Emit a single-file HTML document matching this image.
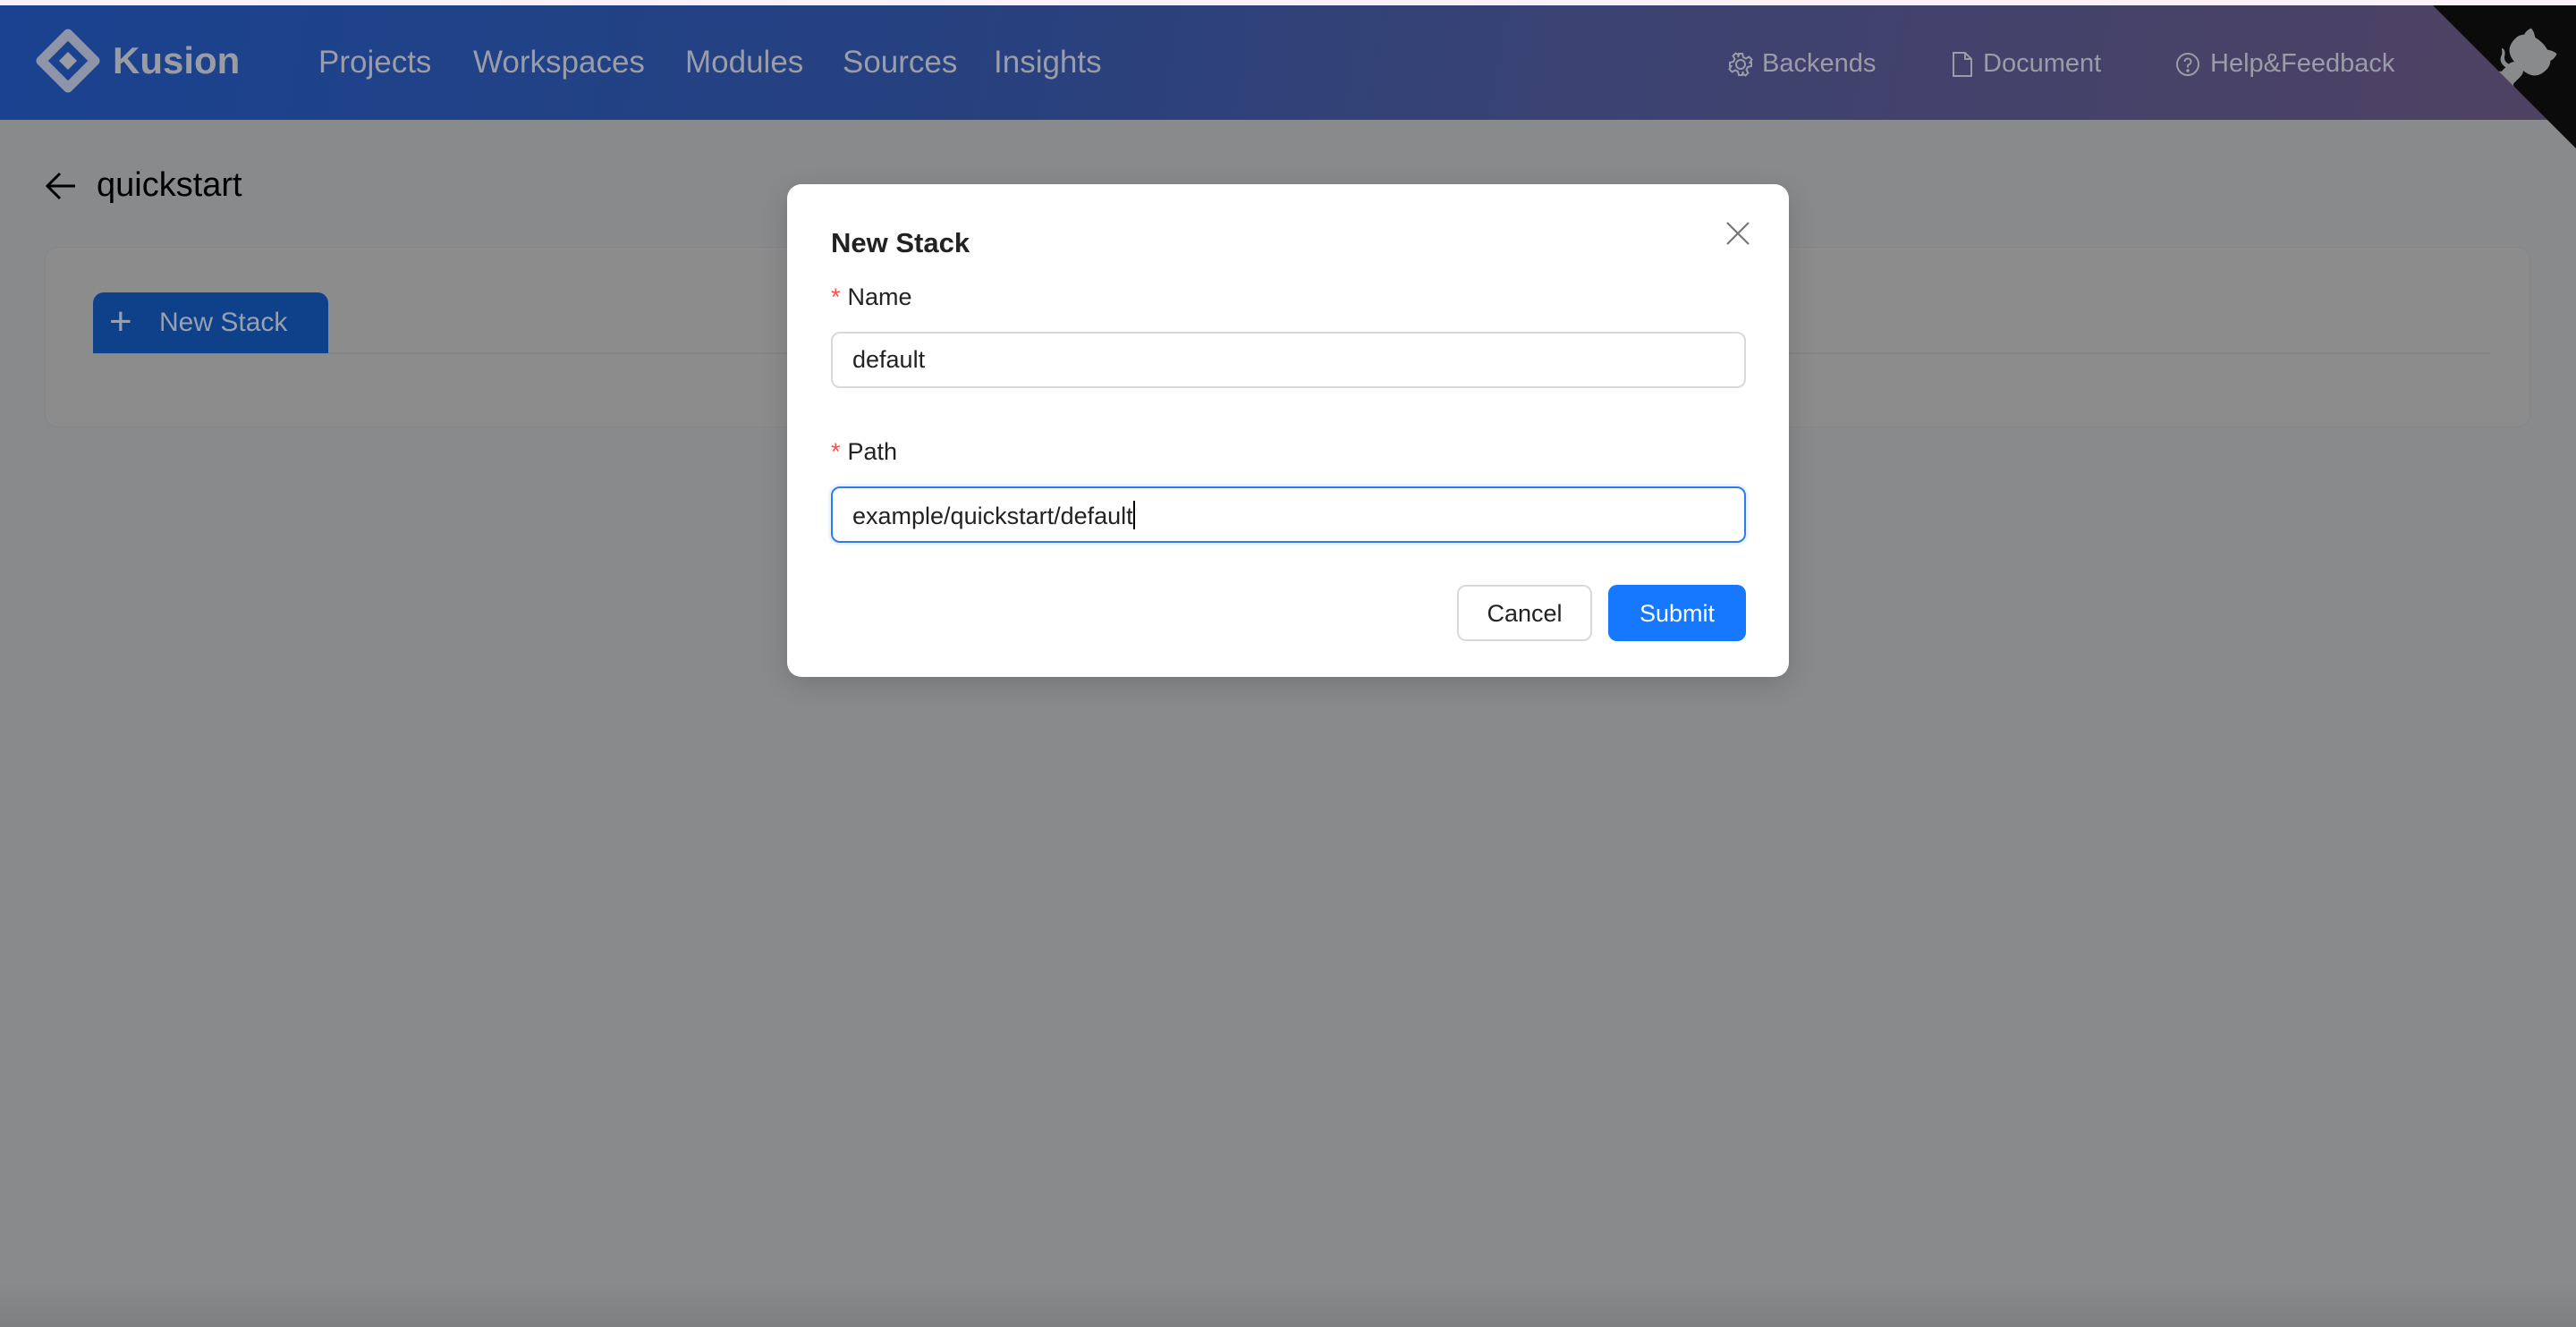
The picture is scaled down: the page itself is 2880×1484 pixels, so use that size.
<!DOCTYPE html>
<html><head><meta charset="utf-8"><style>
*{margin:0;padding:0;box-sizing:border-box}
html,body{width:2880px;height:1484px;overflow:hidden;background:#898a8c;font-family:"Liberation Sans",sans-serif}
.top{position:absolute;left:0;top:0;width:2880px;height:6px;background:#fbf1f9}
.hdr{position:absolute;left:0;top:6px;width:2880px;height:128px;background:linear-gradient(100deg,#1a4290 0%,#28417e 40%,#3d4270 65%,#4f4262 100%)}
.nav{position:absolute;font-size:35px;color:#9a9ca8;white-space:nowrap}
.rnav{position:absolute;font-size:29px;color:#9a9ca8;white-space:nowrap}
.logo{position:absolute;left:38px}
.kusion{position:absolute;left:126px;font-size:42px;font-weight:bold;color:#9a9ca3}
.card{position:absolute;left:50px;top:276px;width:2779px;height:202px;border-radius:14px;background:#8c8c8d;border:1px solid #848586}
.tab{position:absolute;left:104px;top:327px;width:263px;height:68px;background:#0f418b;border-radius:12px 12px 0 0;color:#97a0b0;font-size:30px}
.line{position:absolute;left:104px;top:394px;width:2680px;height:2px;background:#828384}
.modal{position:absolute;left:880px;top:206px;width:1120px;height:551px;background:#fff;border-radius:16px;box-shadow:0 8px 30px rgba(0,0,0,.15)}
.lbl{position:absolute;left:49px;font-size:27px;color:#222}
.lbl b{color:#ff4d4f;font-weight:normal;margin-right:8px}
.inp{position:absolute;left:49px;width:1023px;height:63px;border:2px solid #d9d9d9;border-radius:10px;font-size:27px;color:#222;padding:14px 0 0 22px}
.btn{position:absolute;top:448px;height:63px;border-radius:10px;font-size:27px;text-align:center;line-height:61px}
</style></head><body>
<div class="top"></div>
<div class="hdr">
<svg class="logo" width="76" height="76" viewBox="0 0 76 76" style="top:24px">
<path d="M38 8 L68 38 L38 68 L8 38 Z" fill="none" stroke="#8e95a8" stroke-width="11" stroke-linejoin="round"/>
<path d="M38 28 L48 38 L38 48 L28 38 Z" fill="#9a9ca3"/>
</svg>
<div class="kusion" style="top:38px">Kusion</div>
<div class="nav" style="left:356px;top:44px">Projects</div>
<div class="nav" style="left:529px;top:44px">Workspaces</div>
<div class="nav" style="left:766px;top:44px">Modules</div>
<div class="nav" style="left:942px;top:44px">Sources</div>
<div class="nav" style="left:1111px;top:44px">Insights</div>
<svg style="position:absolute;left:1932px;top:52px" width="28" height="28" viewBox="0 0 28 28" fill="none" stroke="#9a9ca8" stroke-width="2"><circle cx="14" cy="14" r="5"/><path d="M12 2h4l1 4 3 1.5 3.5-2 3 3-2 3.5L26 12v4l-4 1-1.5 3 2 3.5-3 3-3.5-2L17 22l-1 4h-4l-1-4-3-1.5-3.5 2-3-3 2-3.5L2 16v-4l4-1 1.5-3-2-3.5 3-3 3.5 2L11 6z"/></svg>
<div class="rnav" style="left:1970px;top:49px">Backends</div>
<svg style="position:absolute;left:2182px;top:51px" width="24" height="30" viewBox="0 0 24 30" fill="none" stroke="#9a9ca8" stroke-width="2"><path d="M2 2h13l7 7v19H2z M15 2v7h7"/></svg>
<div class="rnav" style="left:2217px;top:49px">Document</div>
<svg style="position:absolute;left:2432px;top:52px" width="28" height="28" viewBox="0 0 28 28" fill="none" stroke="#9a9ca8" stroke-width="2"><circle cx="14" cy="14" r="12"/><path d="M10.5 11a3.5 3.5 0 1 1 4.5 3.3c-.7.3-1 .9-1 1.7v1.5"/><circle cx="14" cy="21" r=".8" fill="#9a9ca8"/></svg>
<div class="rnav" style="left:2471px;top:49px">Help&amp;Feedback</div>
</div>
<svg style="position:absolute;right:0;top:6px" width="160" height="160" viewBox="0 0 250 250">
<path d="M0,0 L115,115 L130,115 L142,142 L250,250 L250,0 Z" fill="#0b0b0b"/>
<g fill="#888a8c">
<path d="M128.3,109.0 C113.8,99.7 119.0,89.6 119.0,89.6 C122.0,82.7 120.5,78.6 120.5,78.6 C119.2,72.0 123.4,76.3 123.4,76.3 C127.3,80.9 125.5,87.3 125.5,87.3 C122.9,97.6 130.6,101.9 134.4,103.2"/>
<path d="M115.0,115.0 C114.9,115.1 118.7,116.5 119.8,115.4 L133.7,101.6 C136.9,99.2 139.9,98.4 142.2,98.6 C133.8,88.0 127.5,74.4 143.8,58.0 C148.5,53.4 154.0,51.2 159.7,51.0 C160.3,49.4 163.2,43.6 171.4,40.1 C171.4,40.1 176.1,42.5 178.8,56.2 C183.1,58.6 187.2,61.8 190.9,65.4 C194.5,69.0 197.7,73.2 200.1,77.6 C213.8,80.2 216.3,84.9 216.3,84.9 C212.7,93.1 206.9,96.0 205.4,96.6 C205.1,102.4 203.0,107.8 198.3,112.5 C181.9,128.9 168.3,122.5 157.7,114.1 C157.9,116.9 156.7,120.9 152.7,124.9 L141.0,136.5 C139.8,137.7 141.6,141.9 141.8,141.8 Z"/>
</g></svg>
<svg style="position:absolute;left:50px;top:190px" width="36" height="36" viewBox="0 0 36 36" fill="none" stroke="#000" stroke-width="3"><path d="M34 18H4 M17 4 L3 18 L17 32"/></svg>
<div style="position:absolute;left:108px;top:186px;font-size:38px;color:#000;font-weight:500">quickstart</div>
<div class="card"></div>
<div class="line"></div>
<div class="tab"><span style="position:absolute;left:18px;top:8px;font-size:44px;font-weight:300">+</span><span style="position:absolute;left:74px;top:17px">New Stack</span></div>
<div style="position:absolute;left:0;top:1434px;width:2880px;height:50px;background:linear-gradient(180deg,rgba(0,0,0,0),rgba(0,0,0,.08));"></div>
<div class="modal">
<div style="position:absolute;left:49px;top:48px;font-size:31px;font-weight:bold;color:#222">New Stack</div>
<svg style="position:absolute;left:1050px;top:42px" width="26" height="26" viewBox="0 0 26 26" stroke="#777" stroke-width="2.2"><path d="M1 1L25 25M25 1L1 25"/></svg>
<div class="lbl" style="top:111px"><b>*</b>Name</div>
<div class="inp" style="top:165px">default</div>
<div class="lbl" style="top:284px"><b>*</b>Path</div>
<div class="inp" style="top:338px;border-color:#2b7cf0;box-shadow:0 0 0 3px rgba(24,119,255,.08)">example/quickstart/default<span style="display:inline-block;width:2px;height:32px;background:#000;vertical-align:-6px"></span></div>
<div class="btn" style="left:749px;width:151px;border:2px solid #d9d9d9;color:#222">Cancel</div>
<div class="btn" style="left:918px;width:154px;background:#1677ff;color:#fff;line-height:65px">Submit</div>
</div>
</body></html>
